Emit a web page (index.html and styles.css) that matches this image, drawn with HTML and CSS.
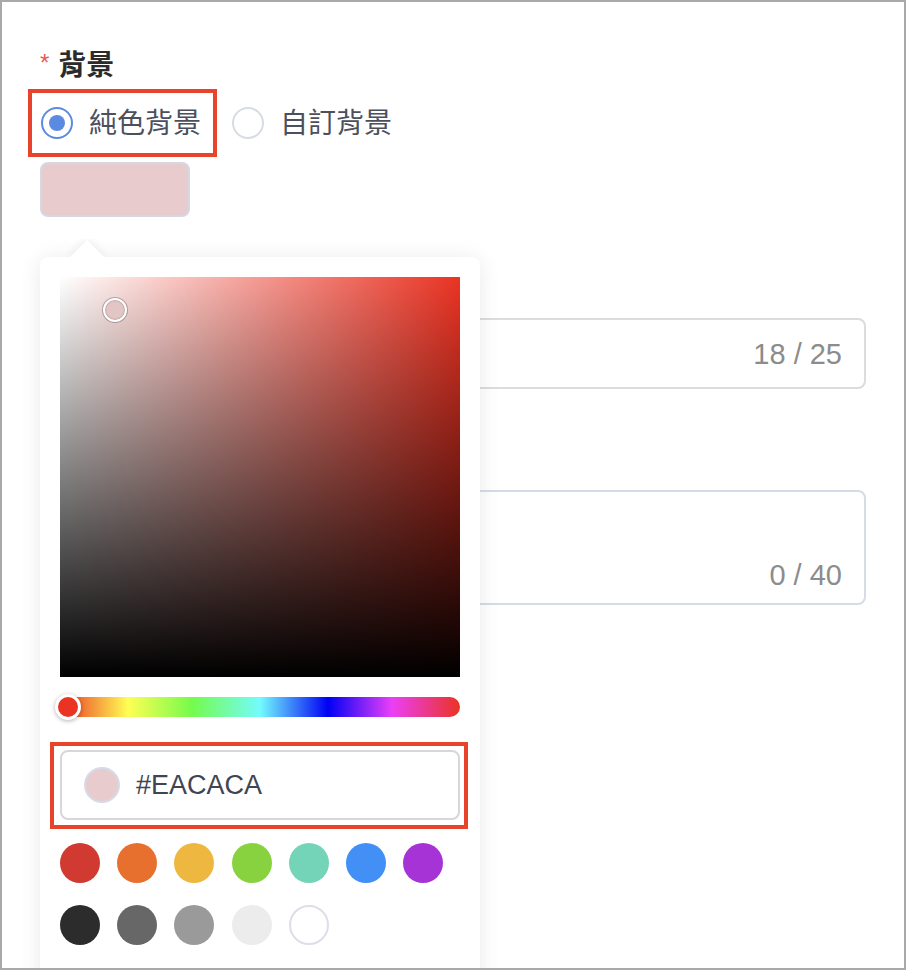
FILE: index.html
```html
<!DOCTYPE html>
<html lang="zh-Hant">
<head>
<meta charset="utf-8">
<title>背景</title>
<link rel="stylesheet" href="styles.css">
</head>
<body>
<div class="frame">
  <div class="form-item">
    <div class="label"><span class="req">*</span>背景</div>
    <div class="radio-group">
      <label class="radio checked"><span class="radio-circle"><span class="dot"></span></span><span class="radio-text">純色背景</span></label>
      <label class="radio"><span class="radio-circle"></span><span class="radio-text">自訂背景</span></label>
    </div>
    <div class="color-trigger"></div>
  </div>
  <div class="field field-one"><span class="count">18 / 25</span></div>
  <div class="field field-two"><span class="count">0 / 40</span></div>

  <div class="popover">
    <div class="arrow-wrap"><div class="arrow"></div></div>
    <div class="sv-panel"><span class="sv-cursor"></span></div>
    <div class="hue"><span class="hue-thumb"></span></div>
    <div class="hex-mark">
      <div class="hex-input"><span class="hex-swatch"></span><span class="hex-text">#EACACA</span></div>
    </div>
    <div class="presets">
      <span class="preset c-red"></span>
      <span class="preset c-orange"></span>
      <span class="preset c-yellow"></span>
      <span class="preset c-green"></span>
      <span class="preset c-teal"></span>
      <span class="preset c-blue"></span>
      <span class="preset c-purple"></span>
      <span class="preset c-black"></span>
      <span class="preset c-dgray"></span>
      <span class="preset c-gray"></span>
      <span class="preset c-light"></span>
      <span class="preset c-white"></span>
    </div>
  </div>
</div>
</body>
</html>
```

FILE: styles.css
```css
html, body {
  margin: 0;
  padding: 0;
  background: #ffffff;
}

body {
  font-family: "Liberation Sans", "Noto Sans CJK TC", sans-serif;
}

.frame {
  position: relative;
  width: 906px;
  height: 970px;
  box-sizing: border-box;
  border: 2px solid #a9a9a9;
  padding: 44px 38px 0 38px;
  overflow: hidden;
  background: #ffffff;
}

.label {
  height: 40px;
  line-height: 40px;
  font-size: 28px;
  font-weight: 700;
  color: #2b2b2b;
  display: flex;
  align-items: center;
}

.req {
  color: #e95a4f;
  font-size: 24px;
  font-weight: 400;
  margin-right: 9px;
  position: relative;
  top: -3px;
}

.radio-group {
  display: flex;
  align-items: center;
  margin-top: 15px;
}

.radio {
  display: inline-flex;
  align-items: center;
  height: 44px;
  padding-right: 4px;
}

.radio + .radio {
  margin-left: 26px;
}

.radio.checked {
  outline: 4px solid #e8432b;
  outline-offset: 8px;
}

.radio-circle {
  width: 32px;
  height: 32px;
  box-sizing: border-box;
  border: 2px solid #d6dbe4;
  border-radius: 50%;
  display: flex;
  align-items: center;
  justify-content: center;
  margin-right: 16px;
  margin-left: 1px;
}

.radio.checked .radio-circle {
  border-color: #5b8be0;
}

.dot {
  width: 16px;
  height: 16px;
  border-radius: 50%;
  background: #5b8be0;
}

.radio-text {
  font-size: 28px;
  line-height: 40px;
  color: #4b505c;
  position: relative;
  top: 1px;
}

.color-trigger {
  margin-top: 17px;
  width: 150px;
  height: 55px;
  box-sizing: border-box;
  border: 2px solid #d3d8e4;
  border-radius: 8px;
  background: #e8cbcd;
}

.field {
  box-sizing: border-box;
  border: 2px solid #dcdcdc;
  border-radius: 8px;
  display: flex;
  justify-content: flex-end;
  padding-right: 22px;
  margin-top: 101px;
}

.field-one {
  height: 71px;
  align-items: center;
}

.field-two {
  height: 115px;
  align-items: flex-end;
  padding-bottom: 8px;
  border-color: #d5dce6;
}

.count {
  font-size: 29px;
  line-height: 40px;
  color: #8c8c8c;
}

/* popover colour picker */
.popover {
  position: absolute;
  left: 38px;
  top: 255px;
  width: 440px;
  box-sizing: border-box;
  padding: 20px 20px 60px 20px;
  background: #ffffff;
  border-radius: 8px;
  box-shadow: 0 2px 22px rgba(0, 0, 0, 0.09);
  z-index: 5;
}

.arrow-wrap {
  position: absolute;
  left: 25px;
  top: -18px;
  width: 44px;
  height: 18px;
  overflow: hidden;
}

.arrow {
  position: absolute;
  left: 10px;
  top: 6px;
  width: 24px;
  height: 24px;
  background: #ffffff;
  transform: rotate(45deg);
  box-shadow: -2px -2px 8px rgba(0, 0, 0, 0.06);
}

.sv-panel {
  position: relative;
  width: 400px;
  height: 400px;
  background:
    linear-gradient(to top, #000000, rgba(0, 0, 0, 0)),
    linear-gradient(to right, #ffffff, #ea3323);
}

.sv-cursor {
  position: absolute;
  left: 43px;
  top: 21px;
  width: 24px;
  height: 24px;
  box-sizing: border-box;
  border-radius: 50%;
  border: 2px solid #ffffff;
  background: #e2c6c6;
  box-shadow: 0 0 0 1px rgba(0, 0, 0, 0.25), inset 0 0 2px rgba(0, 0, 0, 0.4);
}

.hue {
  position: relative;
  margin-top: 20px;
  height: 20px;
  border-radius: 10px;
  background: linear-gradient(to right,
    #ea3323 0%,
    #fffe54 17%,
    #75fb4c 33%,
    #73fbfd 50%,
    #0000f5 67%,
    #ea3ff7 83%,
    #ea3323 100%);
}

.hue-thumb {
  position: absolute;
  left: -5px;
  top: -3px;
  width: 26px;
  height: 26px;
  box-sizing: border-box;
  border-radius: 50%;
  border: 3px solid #ffffff;
  background: #ea3323;
  box-shadow: 0 1px 4px rgba(0, 0, 0, 0.3);
}

.hex-mark {
  margin: 25px -8px 0 -10px;
  padding: 4px 4px 5px 6px;
  border: 4px solid #e8432b;
}

.hex-input {
  height: 70px;
  box-sizing: border-box;
  border: 2px solid #d7d7d7;
  border-radius: 8px;
  display: flex;
  align-items: center;
  padding-left: 22px;
}

.hex-swatch {
  width: 36px;
  height: 36px;
  box-sizing: border-box;
  border-radius: 50%;
  border: 2px solid #d6dbe8;
  background: #e8cbcd;
}

.hex-text {
  margin-left: 16px;
  font-size: 27px;
  color: #3f4553;
}

.presets {
  margin-top: 14px;
  display: grid;
  grid-template-columns: repeat(7, 40px);
  column-gap: 17.2px;
  row-gap: 22px;
}

.preset {
  width: 40px;
  height: 40px;
  box-sizing: border-box;
  border-radius: 50%;
}

.c-red { background: #d03a30; }
.c-orange { background: #e8702e; }
.c-yellow { background: #eeb840; }
.c-green { background: #88d23f; }
.c-teal { background: #73d4b8; }
.c-blue { background: #4290f5; }
.c-purple { background: #a633d6; }
.c-black { background: #2c2c2c; }
.c-dgray { background: #676767; }
.c-gray { background: #9a9a9a; }
.c-light { background: #ececec; }
.c-white { background: #ffffff; border: 2px solid #dcdee9; }
```
